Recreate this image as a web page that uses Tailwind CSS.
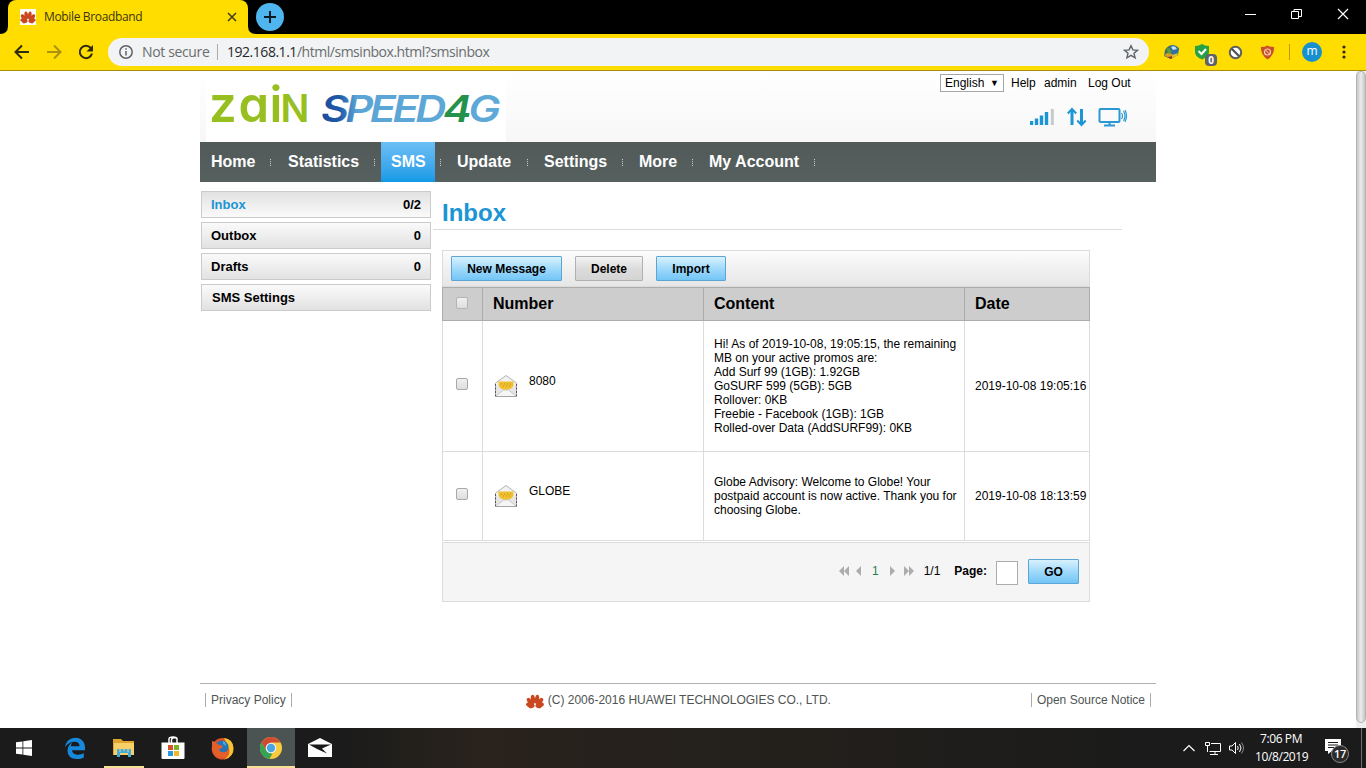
<!DOCTYPE html>
<html lang="en">
  <head>
    <meta charset="UTF-8" />
    <meta name="viewport" content="width=device-width, initial-scale=1.0" />
    <title>Mobile Broadband</title>
    <script src="https://cdn.jsdelivr.net/npm/@tailwindcss/browser@4"></script>
  </head>
  <body class="w-[1366px] h-[768px] overflow-hidden flex flex-col bg-white font-['Liberation_Sans',Arial,sans-serif] text-[12px] leading-[14px] text-black">
    <svg class="hidden">
      <symbol id="flower" viewBox="0 0 18 15">
        <g fill="#c9481f">
          <ellipse cx="7" cy="5.2" rx="2.1" ry="4.6" transform="rotate(-8 7 5.2)" />
          <ellipse cx="11" cy="5.2" rx="2.1" ry="4.6" transform="rotate(8 11 5.2)" />
          <ellipse cx="4.2" cy="7.8" rx="2.3" ry="4.6" transform="rotate(-38 4.2 7.8)" />
          <ellipse cx="13.800" cy="7.8" rx="2.3" ry="4.6" transform="rotate(38 13.800 7.8)" />
          <ellipse cx="4" cy="11" rx="2.2" ry="4" transform="rotate(-75 4 11)" />
          <ellipse cx="14" cy="11" rx="2.2" ry="4" transform="rotate(75 14 11)" />
          <ellipse cx="5.5" cy="12" rx="2" ry="3.2" transform="rotate(70 5.5 12)" />
          <ellipse cx="12.5" cy="12" rx="2" ry="3.2" transform="rotate(-70 12.5 12)" />
        </g>
      </symbol>
      <symbol id="envelope" viewBox="0 0 24 24">
        <path d="M1.500 9 12 1.500 22.500 9v13.500h-21z" fill="#f1f1f1" stroke="#b4b4b4" />
        <path d="M4.500 7.500h15v4q-2 4.500-7.500 4.500t-7.500-4.500z" fill="#f0c030" />
        <path d="M7 10h1m2 0h1m2 0h1m2 0h1M9 12h1m2 0h1m2 0h1" stroke="#c08d1c" />
        <path d="M2 11l7.500 5.500L2 22zM22 11l-7.500 5.500L22 22z" fill="#e4e4e4" />
        <path d="M2 22l7.500-6h5l7.500 6" fill="#f6f6f6" stroke="#c9c9c9" />
        <path d="M1.500 10v13M22.500 10v13" stroke="#5b4a66" stroke-dasharray="2 1.500" />
        <path d="M1 22.500h22" stroke="#a4a4a4" />
      </symbol>
    </svg>

    <!-- tab strip -->
    <div class="h-[34px] shrink-0 bg-black flex items-start font-['Open_Sans','Noto_Sans',sans-serif]">
      <div class="relative ml-2 w-[240px] h-[34px] bg-[#ffdd00] rounded-t-lg flex items-center pl-3 pr-[10px]">
        <svg class="absolute -left-2 bottom-0" width="8" height="8"><path d="M8 0v8H0q8 0 8-8" fill="#fd0" /></svg>
        <svg class="absolute -right-2 bottom-0" width="8" height="8"><path d="M0 0v8h8Q0 8 0 0" fill="#fd0" /></svg>
        <span class="w-4 h-4 bg-white flex items-center"><svg width="16" height="13"><use href="#flower" /></svg></span>
        <span class="ml-2 text-[12px] tracking-[-0.35px] text-[#3b3413]">Mobile Broadband</span>
        <svg class="ml-auto" width="12" height="12" viewBox="0 0 12 12"><path d="M2 2l8 8M10 2l-8 8" stroke="#3f3a1c" stroke-width="1.500" /></svg>
      </div>
      <div class="ml-2 mt-[3px] w-7 h-7 rounded-full bg-[#4fb5ee] flex items-center justify-center">
        <svg width="12" height="12"><path d="M6 0v12M0 6h12" stroke="#0a1a24" stroke-width="2" /></svg>
      </div>
      <div class="ml-auto flex items-center h-7 mr-[17px] gap-[35px]">
        <svg width="11" height="12"><path d="M0 6.500h11" stroke="#fff" /></svg>
        <svg width="11" height="12"><path d="M.5 3.500h7v7h-7zM3 3V1.500h7.500v7H8" fill="none" stroke="#fff" /></svg>
        <svg width="12" height="12"><path d="M1 1l10 10M11 1L1 11" stroke="#fff" stroke-width="1.200" /></svg>
      </div>
    </div>

    <!-- address bar -->
    <div class="h-[37px] shrink-0 bg-[#ffdd00] border-b border-[#a98c0e] flex items-center pl-[14px] font-['Open_Sans','Noto_Sans',sans-serif]">
      <svg width="16" height="16" fill="none" stroke="#2d2a10" stroke-width="2"><path d="M15 8H2M8 1.500 1.500 8 8 14.500" /></svg>
      <svg class="ml-4" width="16" height="16" fill="none" stroke="#ad8f12" stroke-width="2"><path d="M1 8h13M8 1.500 14.500 8 8 14.500" /></svg>
      <svg class="ml-4" width="16" height="16"><path d="M12.800 4A6.200 6.200 0 1 0 14 9.500" fill="none" stroke="#2d2a10" stroke-width="2" /><path d="M15 1v6.500H8.500z" fill="#2d2a10" /></svg>
      <div class="ml-[14px] w-[1041px] h-7 rounded-full bg-[#f1f3f4] flex items-center pl-[11px] pr-[10px] text-[14px]">
        <svg width="14" height="14" fill="none" stroke="#5f6368" stroke-width="1.500"><circle cx="7" cy="7" r="6.200" /><path d="M7 6v4.500M7 3.200v1.600" /></svg>
        <span class="ml-[9px] w-[67px] whitespace-nowrap tracking-[-0.36px] text-[#6a6d6d]">Not secure</span>
        <span class="ml-2 w-px h-4 bg-[#aaadad]"></span>
        <span class="ml-[9px] whitespace-nowrap tracking-[-0.47px] text-[#6a6d6d]"><span class="text-[#27282a]">192.168.1.1</span>/html/smsinbox.html?smsinbox</span>
        <svg class="ml-auto" width="16" height="16" fill="none" stroke="#5f6368" stroke-width="1.400"><path d="M8 1.700l1.900 4.200 4.600.4-3.500 3 1.100 4.500L8 11.400l-4.100 2.400L5 9.300l-3.500-3 4.600-.4z" /></svg>
      </div>
      <!-- extensions -->
      <svg class="ml-[14px]" width="17" height="16"><path d="M2 6q3-5 8-5l6 3-1 7-7 4-7-3z" fill="#3f6f6a" /><circle cx="11" cy="6" r="4.500" fill="#2d6fa8" /><path d="M8 3q4-2 6 2l-4 1z" fill="#cfe3ee" /><path d="M1 11l5-3 4 3-4 3z" fill="#d8a01d" /><path d="M3 5l3-1 3 4-3 2z" fill="#5c9a34" /><path d="M4 13l7-1-3 3z" fill="#a3391c" /><path d="M9 11l6-2-1 3-5 2z" fill="#e0c02c" /></svg>
      <div class="relative ml-[15px] w-4 h-5">
        <svg class="absolute left-0 top-[2px]" width="15" height="16"><path d="M0 2q4 0 7-2 3 2 7 2v6q0 5-7 7.500Q0 13 0 8z" fill="#27a243" /><path d="M3.500 7l3 3 4.500-5" fill="none" stroke="#fff" stroke-width="2" /></svg>
        <span class="absolute left-[10px] top-[12px] w-3 h-3 rounded-sm bg-[#5f6364] text-white text-[10px] font-bold leading-3 text-center">0</span>
      </div>
      <svg class="ml-[17px]" width="15" height="15"><circle cx="7.500" cy="7.500" r="5.700" fill="#fff" stroke="#5c5f60" stroke-width="2" /><path d="M4 4l7 7" stroke="#4e5152" stroke-width="2.200" /></svg>
      <svg class="ml-[17px]" width="15" height="15"><path d="M1 2q4 0 6.500-1.500Q10 2 14 2q.5 8-6.500 12.500Q.5 10 1 2" fill="#c94f26" /><circle cx="7.500" cy="7" r="3" fill="none" stroke="#f6cdb9" stroke-width="1.200" /><path d="M5.500 5l4 4" stroke="#f6cdb9" /></svg>
      <span class="ml-[14px] w-px h-4 bg-[#b8990d]"></span>
      <span class="ml-[12px] w-5 h-5 rounded-full bg-[#1690cf] text-white text-[12px] leading-[18px] text-center">m</span>
      <svg class="ml-[20px]" width="4" height="14" fill="#2d2a10"><circle cx="2" cy="2" r="1.600" /><circle cx="2" cy="7" r="1.600" /><circle cx="2" cy="12" r="1.600" /></svg>
    </div>

    <!-- page -->
    <div class="flex h-[657px] shrink-0">
      <div class="ml-[200px] w-[956px] h-full flex flex-col">
        <header class="h-[71px] shrink-0 bg-linear-to-b from-white to-[#f7f7f7] flex justify-between">
          <div class="ml-[6px] w-[300px] bg-white">
            <svg width="300" height="70" viewBox="0 0 300 70">
              <defs>
                <linearGradient id="speed" gradientUnits="userSpaceOnUse" x1="116" y1="0" x2="292" y2="0">
                  <stop offset="0" stop-color="#1d4c9c" />
                  <stop offset=".1" stop-color="#1f5aa8" />
                  <stop offset=".2" stop-color="#5ba5d6" />
                  <stop offset="1" stop-color="#5fa9d8" />
                </linearGradient>
              </defs>
              <text x="3 32.500 63.500 74.500" y="51" fill="#97bf1f" font-family="Inter" font-weight="600" font-size="49" style="font-feature-settings: 'cv11'">zai<tspan font-size="38">N</tspan></text>
              <text x="115" y="51" fill="url(#speed)" font-family="Inter" font-weight="600" font-style="italic" font-size="37" letter-spacing="-3" textLength="176" lengthAdjust="spacingAndGlyphs">SPEED<tspan fill="#24924a">4</tspan>G</text>
            </svg>
          </div>
          <div class="w-[216px] pt-[3px]">
            <div class="flex items-center h-[18px]">
              <div class="w-16 h-[18px] border border-[#a6a6a6] bg-white flex items-center justify-between pl-1 pr-[4px]">English <span class="text-[9px]">▼</span></div>
              <a class="ml-[7px] w-[33px]">Help</a>
              <a class="w-[44px]">admin</a>
              <a class="whitespace-nowrap">Log Out</a>
            </div>
            <div class="flex items-center mt-[15px] ml-[90px]">
              <svg width="25" height="20"><path d="M1.500 14v4M6.500 11.500v6.500M11.500 8.500V18M16.500 5V18" stroke="#1b95d3" stroke-width="3.400" /><path d="M22.300 2v16" stroke="#c5cacd" stroke-width="3" /></svg>
              <svg class="ml-3" width="20" height="20" fill="none" stroke="#1b95d3" stroke-width="3"><path d="M5 18V3M14.500 2v15" /><path d="M.8 6.500 5 2l4.200 4.500M10.300 13.500l4.200 4.500 4.200-4.500" stroke-width="2" /></svg>
              <svg class="ml-[11px]" width="30" height="20" fill="none" stroke="#2b98d2"><rect x="1.500" y="2" width="20" height="13" rx="1" stroke-width="2" /><path d="M11.500 15v3M6 18.500h11" stroke-width="2" /><path d="M23.500 6q2 3 0 6M25.500 4q3 5 0 10M27 3q3 6 0 12" stroke-width="1.200" /></svg>
            </div>
          </div>
        </header>

        <nav class="h-10 shrink-0 bg-linear-to-b from-[#515a59] to-[#56605f] pl-px">
          <ul class="flex h-10 text-[16px] leading-[38px] font-bold text-white whitespace-nowrap">
            <li class="w-[77px] flex justify-between items-center"><a class="px-[10px]">Home</a><i class="mr-[7px] h-[7px] border-l border-dotted border-[#c8cccb]"></i></li>
            <li class="w-[103px] flex justify-between items-center"><a class="px-[10px]">Statistics</a><i class="mr-[6px] h-[7px] border-l border-dotted border-[#c8cccb]"></i></li>
            <li class="w-[66px] flex justify-between items-center"><a class="w-[54px] h-10 pt-px px-[10px] bg-linear-to-b from-[#6bbff5] to-[#0d9ae6]">SMS</a><i class="mr-[6px] h-[7px] border-l border-dotted border-[#c8cccb]"></i></li>
            <li class="w-[87px] flex justify-between items-center"><a class="px-[10px]">Update</a><i class="mr-[6px] h-[7px] border-l border-dotted border-[#c8cccb]"></i></li>
            <li class="w-[95px] flex justify-between items-center"><a class="px-[10px]">Settings</a><i class="mr-[6px] h-[7px] border-l border-dotted border-[#c8cccb]"></i></li>
            <li class="w-[70px] flex justify-between items-center"><a class="px-[10px]">More</a><i class="mr-[6px] h-[7px] border-l border-dotted border-[#c8cccb]"></i></li>
            <li class="w-[122px] flex justify-between items-center"><a class="px-[10px]">My Account</a><i class="mr-[6px] h-[7px] border-l border-dotted border-[#c8cccb]"></i></li>
          </ul>
        </nav>

        <div class="flex h-[501px] shrink-0">
          <ul class="ml-px mt-[9px] w-[230px] flex flex-col gap-1 text-[13px] font-bold">
            <li class="h-[27px] flex items-center justify-between px-[9px] border border-[#cbcbcb] bg-linear-to-b from-[#e2e2e2] to-[#fafafa]"><span class="text-[#1b95d3]">Inbox</span><span>0/2</span></li>
            <li class="h-[27px] flex items-center justify-between px-[9px] border border-[#cbcbcb] bg-linear-to-b from-[#fafafa] to-[#e2e2e2]"><span>Outbox</span><span>0</span></li>
            <li class="h-[27px] flex items-center justify-between px-[9px] border border-[#cbcbcb] bg-linear-to-b from-[#fafafa] to-[#e2e2e2]"><span>Drafts</span><span>0</span></li>
            <li class="h-[27px] flex items-center px-[10px] border border-[#cbcbcb] bg-linear-to-b from-[#fafafa] to-[#e2e2e2]"><span>SMS Settings</span></li>
          </ul>

          <main class="ml-[2px] w-[689px]">
            <h1 class="h-[48px] pt-[17px] pl-[9px] border-b border-[#dcdcdc] text-[24px] leading-7 font-bold text-[#1b95d3]">Inbox</h1>
            <div class="ml-[9px] mt-5 w-[648px]">
              <div class="h-[37px] border border-[#dcdcdc] bg-linear-to-b from-[#fcfcfc] to-[#e6e6e6] flex items-start pt-[5px] pl-2 gap-[13px] font-bold">
                <button class="w-[111px] h-[25px] border border-[#5ca5d4] rounded-[1px] bg-linear-to-b from-[#d8f1fd] via-[#a0dafb] to-[#72c5f6]">New Message</button>
                <button class="w-[68px] h-[25px] border border-[#b0b0b0] rounded-[1px] bg-linear-to-b from-[#f4f4f4] via-[#dcdcdc] to-[#d4d4d4]">Delete</button>
                <button class="w-[70px] h-[25px] border border-[#5ca5d4] rounded-[1px] bg-linear-to-b from-[#d8f1fd] via-[#a0dafb] to-[#72c5f6]">Import</button>
              </div>

              <div class="grid grid-cols-[40px_221px_261px_126px] grid-rows-[34px_130px_90px]">
                <div class="bg-[#cdcdcd] border-y border-l border-[#acacac] flex items-center justify-center pb-[3px] pr-px"><span class="w-3 h-3 rounded-[2px] border border-[#b4b4b4] bg-linear-to-b from-[#f0f0f0] to-[#dedede]"></span></div>
                <div class="bg-[#cdcdcd] border-y border-l border-[#acacac] flex items-center pl-[10px] pb-px text-[16px] font-bold">Number</div>
                <div class="bg-[#cdcdcd] border-y border-l border-[#acacac] flex items-center pl-[10px] pb-px text-[16px] font-bold">Content</div>
                <div class="bg-[#cdcdcd] border border-[#acacac] flex items-center pl-[10px] pb-px text-[16px] font-bold">Date</div>

                <div class="border-l border-[#dcdcdc] flex items-center justify-center pb-1 pr-px"><span class="w-3 h-3 rounded-[2px] border border-[#a9a9a9] bg-linear-to-b from-[#f0f0f0] to-[#dedede]"></span></div>
                <div class="border-l border-[#dcdcdc] flex items-center pl-[11px]"><svg width="24" height="24"><use href="#envelope" /></svg><span class="ml-[11px] pb-[10px]">8080</span></div>
                <div class="border-l border-[#dcdcdc] flex items-center pl-[10px] whitespace-nowrap">Hi! As of 2019-10-08, 19:05:15, the remaining<br />MB on your active promos are:<br />Add Surf 99 (1GB): 1.92GB<br />GoSURF 599 (5GB): 5GB<br />Rollover: 0KB<br />Freebie - Facebook (1GB): 1GB<br />Rolled-over Data (AddSURF99): 0KB</div>
                <div class="border-x border-[#dcdcdc] flex items-center pl-[10px] whitespace-nowrap">2019-10-08 19:05:16</div>

                <div class="border-y border-l border-[#dcdcdc] flex items-center justify-center pb-1 pr-px"><span class="w-3 h-3 rounded-[2px] border border-[#a9a9a9] bg-linear-to-b from-[#f0f0f0] to-[#dedede]"></span></div>
                <div class="border-y border-l border-[#dcdcdc] flex items-center pl-[11px]"><svg width="24" height="24"><use href="#envelope" /></svg><span class="ml-[11px] pb-[10px]">GLOBE</span></div>
                <div class="border-y border-l border-[#dcdcdc] flex items-center pl-[10px] whitespace-nowrap">Globe Advisory: Welcome to Globe! Your<br />postpaid account is now active. Thank you for<br />choosing Globe.</div>
                <div class="border border-[#dcdcdc] flex items-center pl-[10px] whitespace-nowrap">2019-10-08 18:13:59</div>
              </div>

              <div class="mt-px h-[60px] border border-[#dcdcdc] bg-[#f5f5f5] flex items-center justify-end pr-[10px] pb-[2px]">
                <svg width="10" height="10" fill="#acacac"><path d="M5 0v10L0 5zM10 0v10L5 5z" /></svg>
                <svg class="ml-[7px]" width="5" height="10" fill="#acacac"><path d="M5 0v10L0 5z" /></svg>
                <span class="ml-[11px] text-[#1d7f4f]">1</span>
                <svg class="ml-[11px]" width="5" height="10" fill="#acacac"><path d="M0 0v10l5-5z" /></svg>
                <svg class="ml-[9px]" width="10" height="10" fill="#acacac"><path d="M0 0v10l5-5zM5 0v10l5-5z" /></svg>
                <span class="ml-[10px]">1/1</span>
                <span class="ml-[14px] font-bold">Page:</span>
                <span class="ml-[9px] mt-[3px] w-[22px] h-6 border border-[#acacac] bg-white"></span>
                <button class="ml-[10px] w-[51px] h-[25px] pt-px border border-[#5ca5d4] rounded-[1px] bg-linear-to-b from-[#d8f1fd] via-[#a0dafb] to-[#72c5f6] font-bold">GO</button>
              </div>
            </div>
          </main>
        </div>

        <footer class="border-t border-[#b0b0b0] pt-[9px] px-[5px] flex items-start justify-between text-[#4f5453]">
          <a class="h-[14px] border-x border-[#acacac] px-[5px]">Privacy Policy</a>
          <span class="flex items-start gap-1 ml-[34px]"><svg class="mt-px" width="18" height="15"><use href="#flower" /></svg>(C) 2006-2016 HUAWEI TECHNOLOGIES CO., LTD.</span>
          <a class="h-[14px] border-x border-[#acacac] px-[5px]">Open Source Notice</a>
        </footer>
      </div>

      <div class="ml-auto w-[10px] h-full bg-[#f0f0f0]">
        <div class="h-[652px] rounded-[5px] border border-[#b4b4b4] bg-linear-to-r from-[#c8c8c8] via-[#ededed] to-[#c4c4c4]"></div>
      </div>
    </div>

    <!-- taskbar -->
    <div class="h-10 shrink-0 flex items-center bg-linear-to-r from-[#1b1b1b] from-25% via-[#29231c] via-35% to-[#1b1b1b] to-85% text-white font-['Open_Sans','Noto_Sans',sans-serif]">
      <div class="w-[50px] flex pl-4"><svg width="16" height="16" fill="#fff"><path d="M0 2.300 6.500 1.400v6.200H0zM7.300 1.300 16 0v7.600H7.300zM0 8.400h6.500v6.200L0 13.700zM7.300 8.400H16V16l-8.700-1.300z" /></svg></div>
      <div class="w-[49px] flex justify-center"><svg width="22" height="22"><path d="M1 10C2 4 6 .5 11.500.5 17.500.5 21 5 21 10v3H8c.2 3 3 4.500 6 4.500 2.300 0 4.300-.7 5.800-1.600v4.300c-2 1-4.300 1.500-6.800 1.500-6 0-9.500-3.500-9.500-8.500 0-3.700 2-6.500 5-8-1 1.200-1.500 2.400-1.600 3.800h8.600c0-3-1.700-4.500-4.500-4.500C6.500 4.500 3 6.500 1 10" fill="#1789dc" transform="translate(0 .2)" /></svg></div>
      <div class="w-[49px] h-10 flex items-center justify-center relative">
        <svg width="22" height="20"><path d="M0 1h8l2 2h11v14H0z" fill="#e0a32c" /><path d="M1 5h20v12H1z" fill="#f7cf69" /><path d="M4 19v-8h14v8h-3v-4H7v4z" fill="#45a9dc" /><path d="M7 11v3M11 11v2M15 11v3" stroke="#f7cf69" /></svg>
        <span class="absolute bottom-0 left-[5px] w-10 h-[2px] bg-[#f6e094]"></span>
      </div>
      <div class="w-[49px] flex justify-center"><svg width="24" height="24"><path d="M8 7V3q0-2 4-2t4 2v4M10.500 7V4q0-3 5-2" fill="none" stroke="#fff" stroke-width="1.500" /><path d="M.5 6.500h23V22q0 1-1 1h-21q-1 0-1-1z" fill="#fff" /><path d="M7 9h5v5H7z" fill="#d8502a" /><path d="M13 9h5v5h-5z" fill="#7cb32a" /><path d="M7 15h5v5H7z" fill="#2b9bd8" /><path d="M13 15h5v5h-5z" fill="#f3b922" /></svg></div>
      <div class="w-[50px] flex justify-center"><svg width="23" height="23"><circle cx="11.500" cy="11.800" r="10.800" fill="#dd4f28" /><path d="M13 1q9 1 9.500 10T13 22.500q8-5 4-13z" fill="#f8c32d" /><circle cx="11" cy="10" r="6.500" fill="#2374b8" /><path d="M1 4q3 0 5 3l6 2q-1 3-4 3 1 4 6 3 4-1 4-4 2 9-6 10Q2 21 1 11z" fill="#e4602a" /><path d="M12 4q3 1 3 5l-3-2z" fill="#4dabdf" /></svg></div>
      <div class="w-12 h-10 flex items-center justify-center bg-[#4b5453] border-b-2 border-[#f6e094]"><svg class="mt-[2px]" width="22" height="22"><circle cx="11" cy="11" r="11" fill="#f7cb3c" /><path d="M1.500 5.500A11 11 0 0 1 20.500 5.500H11L6.200 13.800z" fill="#cf4b32" /><path d="M1.500 5.500 6.200 13.800 11 16.500l1.500-.3L9.500 22A11 11 0 0 1 1.500 5.500" fill="#36a354" /><circle cx="11" cy="11" r="5.300" fill="#f4f4f4" /><circle cx="11" cy="11" r="4.200" fill="#49a4e2" /></svg></div>
      <div class="w-[49px] flex justify-center"><svg width="24" height="20"><path d="M0 6 12 0l12 6v13H0z" fill="#fff" /><path d="M1 6.500h22l-9 4 5 5L9 11z" fill="#1d1b19" /></svg></div>

      <div class="ml-auto flex items-center">
        <svg width="12" height="8"><path d="M.5 7 6 1.500 11.500 7" fill="none" stroke="#fff" stroke-width="1.200" /></svg>
        <svg class="ml-[10px]" width="16" height="14" fill="none" stroke="#fff"><path d="M6 2.500h9.500v8h-11M.5 1.500h4v3h-4zM2.500 5v6M10 11v2.500M5 13.500h8" /></svg>
        <svg class="ml-2" width="16" height="14" fill="none" stroke="#fff"><path d="M.5 5v4H3l3.500 3.500v-11L3 5z" /><path d="M8.500 5q1.500 2 0 4M10.500 3q3 4 0 8" /><path d="M12.500 1.500q4 5.500 0 11" stroke="#8a8a8a" /></svg>
        <div class="ml-[10px] w-[52px] text-[12px] leading-[18px] tracking-[-0.4px] text-center whitespace-nowrap">7:06 PM<br />10/8/2019</div>
        <div class="relative ml-[18px] w-[25px] h-6 pt-[2px]">
          <svg width="17" height="17"><path d="M0 1h16v12H7l-4 3v-3H0z" fill="#fff" /><path d="M3 4.500h10M3 7h10M3 9.500h6" stroke="#1b1b1b" /></svg>
          <span class="absolute left-[6px] top-[9px] w-[18px] h-[18px] rounded-full border border-[#8a8a8a] bg-[#2b2b2b] text-[11px] font-semibold leading-4 text-center tracking-[-0.3px]">17</span>
        </div>
        <span class="ml-[11px] w-px h-10 mr-1 bg-[#6e6e6e]"></span>
      </div>
    </div>
  </body>
</html>
